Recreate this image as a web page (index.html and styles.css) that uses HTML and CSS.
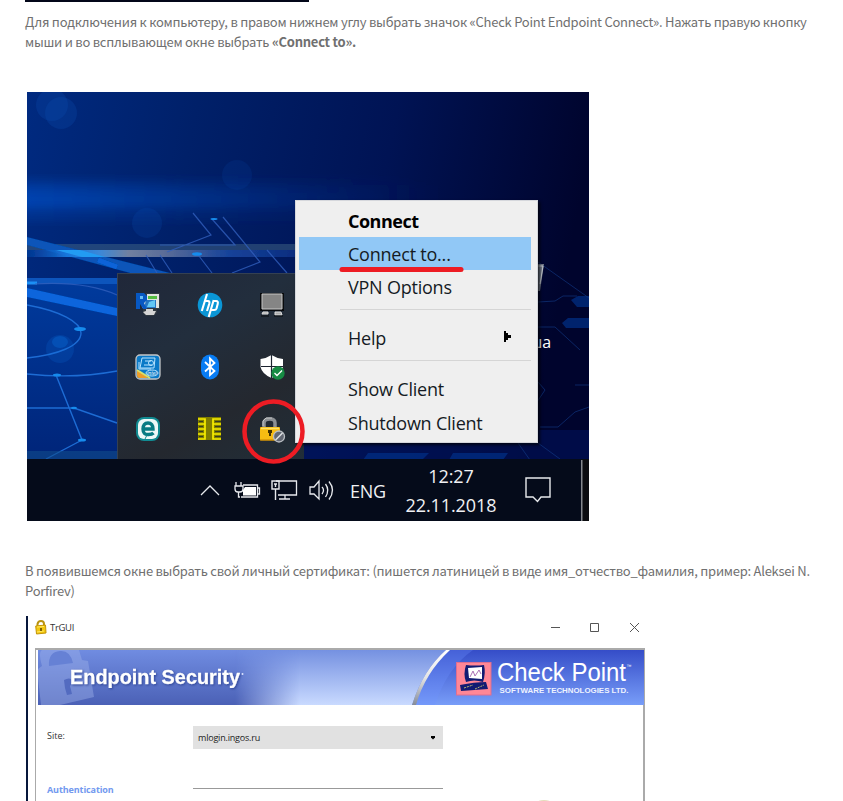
FILE: index.html
```html
<!DOCTYPE html>
<html lang="ru">
<head>
<meta charset="utf-8">
<title>Check Point Endpoint Connect</title>
<link rel="stylesheet" href="styles.css">
</head>
<body>
<main class="article">
  <div class="previous-image"></div>
  <p class="step"><span class="l1">Для подключения к компьютеру, в правом нижнем углу выбрать значок «Check Point Endpoint Connect». Нажать правую кнопку</span><br><span class="l2">мыши и во всплывающем окне выбрать <b>«Connect to».</b></span></p>

  <section class="desktop">
    <svg class="wallpaper" viewBox="27 92 562 429" aria-hidden="true">
      <defs>
        <linearGradient id="sky" x1="0" y1="0" x2="1" y2="0.15"><stop offset="0" stop-color="#002a80"/><stop offset=".3" stop-color="#002069"/><stop offset=".65" stop-color="#001354"/><stop offset="1" stop-color="#00042d"/></linearGradient>
        <linearGradient id="glow" x1="0" x2="1" y1="0" y2="0"><stop offset="0" stop-color="#0050c8" stop-opacity=".75"/><stop offset=".5" stop-color="#0044b0" stop-opacity=".35"/><stop offset="1" stop-color="#003090" stop-opacity="0"/></linearGradient>
        <linearGradient id="flare" x1="0" x2="1" y1="0" y2="0"><stop offset="0" stop-color="#0a4bb0" stop-opacity=".4"/><stop offset=".15" stop-color="#1777dc"/><stop offset=".27" stop-color="#3b88d8"/><stop offset=".38" stop-color="#7180a0"/><stop offset=".52" stop-color="#596b98"/><stop offset=".75" stop-color="#17439a"/><stop offset="1" stop-color="#0a2d80"/></linearGradient>
        <linearGradient id="low" x1="0" x2="0" y1="0" y2="1"><stop offset="0" stop-color="#003a9c"/><stop offset="1" stop-color="#002478"/></linearGradient>
        <filter id="soft"><feGaussianBlur stdDeviation="4"/></filter>
        <filter id="edge"><feGaussianBlur stdDeviation=".5"/></filter>
      </defs>
      <rect x="27" y="92" width="562" height="429" fill="url(#sky)"/>
      <g fill="#0a50b4" fill-opacity=".25"><circle cx="52" cy="105" r="16"/><circle cx="61" cy="113" r="16"/><circle cx="237" cy="175" r="15" fill-opacity=".15"/><circle cx="147" cy="223" r="15" fill-opacity=".2"/></g>
      <g fill="url(#glow)" filter="url(#soft)"><rect x="17" y="179" width="410" height="42" opacity=".35"/><rect x="17" y="185" width="430" height="24" opacity=".5"/><rect x="17" y="193" width="370" height="14" opacity=".45"/></g>
      <rect x="27" y="284" width="92" height="180" fill="url(#low)"/>
      <rect x="27" y="244" width="268" height="6" fill="#426583" fill-opacity=".5"/>
      <g filter="url(#edge)">
        <path d="M27 237L170 273H130L27 245Z" fill="#0754b9"/>
        <rect x="27" y="250" width="268" height="7" fill="url(#flare)"/>
        <path d="M56 250L82 257H105L80 250Z" fill="#249cf3"/>
        <rect x="27" y="278" width="90" height="6" fill="#0754bc"/>
        <path d="M27 288L117 308V316L27 297Z" fill="#0865dc"/>
        <path d="M27 283H37" stroke="#1e90f5" stroke-width="3"/>
        <path d="M98 260L117 267" stroke="#0864d8" stroke-width="5"/>
      </g>
      <g fill="none" stroke="#315fbd" stroke-width="1.2" opacity=".8">
        <path d="M193 213L211 235L167 252M212 219L235 245H160M223 217L260 262L232 273M267 250L287 273M146 255L157 273M160 255L172 273M199 256L212 273"/>
        <path d="M35 284Q85 281 117 295"/>
      </g>
      <g fill="none" stroke="#1d6cd4" stroke-width="1.4">
        <path d="M27 305C60 311 81 322 81 333C81 346 57 355 27 358M27 374Q75 379 117 371M56 375L82 440L46 459M27 408H74L117 423"/>
      </g>
      <g fill="#168bed"><ellipse cx="80" cy="329" rx="6" ry="2"/><ellipse cx="57" cy="375" rx="4" ry="1.5"/><ellipse cx="82" cy="440" rx="4" ry="1.5"/><ellipse cx="74" cy="408" rx="3" ry="1.2"/><ellipse cx="197" cy="254" rx="5" ry="1.8"/><ellipse cx="214" cy="219" rx="3.5" ry="1"/></g>
      <circle cx="60" cy="349" r="14" fill="#0870dc" fill-opacity=".2"/><ellipse cx="60" cy="342" rx="8" ry="6" fill="#0870dc" fill-opacity=".35"/>
      <rect x="27" y="451" width="90" height="8" fill="#104c8b" fill-opacity=".6"/>
      <path d="M303 430H589V460H303Z" fill="#00135a" opacity=".6"/>
      <g fill="#002e83"><path d="M571 300L578 296H589V307H577ZM562 323L568 318H589V328H566ZM363 460L368 453H429L422 460ZM449 460L453 453H508L503 460Z" opacity=".75"/></g>
      <path d="M538 262L589 298M538 302L555 301L563 296H577M538 327H555L580 350M538 382L545 390L537 402M540 427H558L575 412L589 407M575 385H589M530 460L518 443H538L560 459" fill="none" stroke="#123c88" stroke-width="1" opacity=".6"/>
      <path d="M537 264H544L540 291H537Z" fill="#71798a"/><path d="M538 266H543L540 284" fill="none" stroke="#c8ccd2"/>
      <rect x="27" y="459" width="562" height="62" fill="#050b1a"/>
      <rect x="581" y="459" width="8" height="62" fill="#0b0c10"/><rect x="581" y="460" width="1.5" height="61" fill="#85888e"/>
    </svg>
    <span class="desktop-label">ша</span>

    <div class="tray">
      <svg class="icon" viewBox="0 0 28 28"><path d="M12 2H26V18H23V22L19 25H12L9 22V18Z" fill="#303941"/><path d="M13 3H25V17H8V7H13Z" fill="#e1e3de"/><path d="M14 5H23V8H14Z" fill="#54bd40"/><path d="M12 9H22V17H10Z" fill="#2676c3"/><path d="M15 11L21 9V16H13Z" fill="#63c8f5"/><path d="M12 18H19V20H22L20 24H12L9 21L12 20Z" fill="#d4d4d4"/><path d="M2 2H10L13 5V9L10 12L13 18H9L6 13V18H2Z" fill="#0758c3"/><path d="M6 5H9V8H6Z" fill="#6abdf5"/></svg>
      <svg class="icon" viewBox="0 0 28 28"><circle cx="14" cy="14" r="12.3" fill="#0a96d6"/><g fill="none" stroke="#fff" stroke-width="2.1"><path d="M11 3L5.8 20M9 10H12Q14 10 13.2 13L11 20M17.7 9L12.7 26M17.5 10H20Q22.5 10 21.7 13L20.5 17.5Q20 19 18 19H15"/></g></svg>
      <svg class="icon" viewBox="0 0 28 28"><path d="M2 2H26V20H2Z" fill="#080a0d"/><path d="M4 3H24V18H4Z" fill="#858585" stroke="#c6c6c6"/><path d="M5 21H10V23H4ZM17 21H23L24 24H17Z" fill="#aaa" stroke="#ddd"/><path d="M3 25H11M16 25H25" stroke="#080a0d"/></svg>
      <svg class="icon" viewBox="0 0 28 28"><rect x="2" y="2" width="24" height="24" rx="4" fill="#0a79c7" stroke="#c4c6c8" stroke-width="1.3"/><path d="M3 17Q11 22 14 25H5Q3 25 3 22Z" fill="#ed9d29"/><path d="M3 17L16 25" stroke="#d7e06c" stroke-width="2"/><g fill="none" stroke="#b8e4ff"><path d="M8 5H21L20 15H6Z"/><path d="M5 9V16H17M11 8H17M10 12H18"/><circle cx="17" cy="10" r="2.5"/><ellipse cx="18" cy="20" rx="6" ry="3"/></g><text x="13" y="22" class="micro">intel</text></svg>
      <svg class="icon" viewBox="0 0 28 28"><rect x="5" y="1.5" width="18" height="25" rx="9" fill="#087cf3"/><path d="M9 9L18.5 18L14 22V5.5L18.5 10L9 18.5" fill="none" stroke="#fff" stroke-width="1.8"/></svg>
      <svg class="icon" viewBox="0 0 28 28"><path d="M13.5 2Q9 5 2.5 6V14Q4 21 13.5 25Q23 21 25 14V6Q18 5 13.5 2Z" fill="#fff"/><path d="M13.5 2V25M3 13.5H25" stroke="#1c2330" stroke-width="1.2"/><circle cx="20" cy="20" r="6.7" fill="#168b43"/><path d="M16.5 20L19 22.5L24 17.5" stroke="#fff" stroke-width="1.4" fill="none"/></svg>
      <svg class="icon" viewBox="0 0 28 28"><rect x="2" y="2" width="24" height="24" rx="8" fill="#118b92"/><rect x="4" y="4" width="20" height="20" rx="6" fill="#edf8f7"/><path d="M9 14H19Q19 8 14 8Q9 8 9 14T14.5 19.5Q18 19.5 19.5 18" fill="none" stroke="#087b83" stroke-width="3.4"/><path d="M11 24L13 20" stroke="#118b92"/></svg>
      <svg class="icon" viewBox="0 0 28 28"><path d="M2 2H25V25H2Z" fill="#807d00"/><path d="M2 4H9V24H2M25 4H17V24H25M2 9H9M2 14H9M2 19H9M17 9H25M17 14H25M17 19H25" fill="none" stroke="#f7ee00" stroke-width="1.7"/><path d="M3 6.5H7M3 11.5H7M3 16.5H7M3 21.5H7M19 6.5H25M19 11.5H25M19 16.5H25M19 21.5H25" stroke="#363d20" stroke-width="1"/></svg>
      <svg class="icon" viewBox="0 0 28 28"><path d="M6 14V8Q6 4 12 4Q17 4 17 8V14" fill="none" stroke="#8c9094" stroke-width="3.5"/><path d="M5 11V6L8 3H14" fill="none" stroke="#c5c7c8"/><rect x="2" y="12" width="20" height="13.5" rx="1" fill="#f7bc12"/><path d="M3 13.5H21" stroke="#ffe263" stroke-width="1.5"/><path d="M2 25H20" stroke="#c48200"/><path d="M10 15H14V18H13V21H11V18H10Z" fill="#423100"/><circle cx="21" cy="21.5" r="5.5" fill="#626873" stroke="#b9bec3" stroke-width="1.3"/><path d="M17.5 25L24.5 18" stroke="#e0e3e5" stroke-width="1.5"/></svg>
    </div>

    <div class="menu">
      <div class="item strong"><span>Connect</span></div>
      <div class="item active"><span>Connect to...</span></div>
      <div class="item vpn"><span>VPN Options</span></div>
      <hr>
      <div class="item help"><span>Help</span><svg class="arrow" viewBox="0 0 8 12"><path d="M0 0H2V2H4V4H7V7H4V9H2V11H0Z"/></svg></div>
      <hr class="second">
      <div class="item show"><span>Show Client</span></div>
      <div class="item"><span>Shutdown Client</span></div>
    </div>

    <svg class="marks" viewBox="27 92 562 429" aria-hidden="true"><path d="M342 269.5H461" stroke="#ed1c24" stroke-width="5" stroke-linecap="round"/><ellipse cx="273.5" cy="431.5" rx="29" ry="30" fill="none" stroke="#ed1c24" stroke-width="4.5"/></svg>

    <div class="taskbar">
      <svg class="status" viewBox="198 476 140 28"><g fill="none" stroke="#e7e9ed" stroke-width="1.3"><path d="M201 495L210 486L219 495"/><path d="M236 482V486M241 482V486M235 486H243V489Q243 492 240 492H238Q235 492 235 489ZM238.5 492V497H240"/><path d="M243 485H257.5V497H241M258 488H259.5V494H258"/><path d="M276 481H296.5V495H278M285 495V499M279 499H290"/><path d="M272 481H279V489H272ZM275.5 489V500M274 484H277M275.5 484V487" stroke-width="1.4"/><path d="M310 487H314L319 481V499L314 494H310ZM322 487Q325 490 322 494M325.5 484Q330 490 325.5 497M329 481.5Q336 490 329 499.5"/></g><path d="M245 487H256V495.5H243V490Z" fill="#fff"/></svg>
      <span class="lang">ENG</span>
      <div class="clock"><span class="time">12:27</span><span class="date">22.11.2018</span></div>
      <svg class="notice" viewBox="0 0 28 28"><path d="M2 2H26V21H17L13.5 25.5L9 21H2Z" fill="none" stroke="#e8eaed" stroke-width="1.4"/></svg>
    </div>
  </section>

  <p class="step second-step"><span class="l3">В появившемся окне выбрать свой личный сертификат: (пишется латиницей в виде имя_отчество_фамилия, пример: Aleksei N.</span><br><span class="l4">Porfirev)</span></p>

  <section class="client">
    <header class="titlebar">
      <svg class="lock" viewBox="0 0 12 15"><path d="M2.5 7V4Q3 1 6 1Q9 1 9 4V6" fill="none" stroke="#b99310" stroke-width="2"/><path d="M.7 6L10.5 5L11 13L1.5 14Z" fill="#f3c70f" stroke="#c49507"/><path d="M2 7L9 6.5M2 12L9 11" stroke="#ffe963"/><path d="M6 8V11" stroke="#6b5000" stroke-width="1.7"/></svg>
      <span class="caption">TrGUI</span>
      <svg class="controls" viewBox="550 620 92 14"><path d="M551 627.5H560M590.5 623.5H598.5V631.5H590.5ZM630 623L639 632M639 623L630 632" fill="none" stroke="#555"/></svg>
    </header>
    <div class="frame">
      <svg class="banner" viewBox="38 650 606 55">
        <defs>
          <linearGradient id="left" x2="0" y2="1"><stop stop-color="#708ce1"/><stop offset="1" stop-color="#4b61b6"/></linearGradient>
          <linearGradient id="pale" x2="0" y2="1"><stop stop-color="#7591e1"/><stop offset="1" stop-color="#c9daff"/></linearGradient>
          <linearGradient id="fade"><stop stop-color="#fff" stop-opacity="0"/><stop offset="1" stop-color="#fff"/></linearGradient>
          <linearGradient id="right" x2="0" y2="1"><stop stop-color="#354dc8"/><stop offset="1" stop-color="#789df8"/></linearGradient>
          <linearGradient id="rim" x2="0" y2="1"><stop stop-color="#fff"/><stop offset=".5" stop-color="#e5e5e5"/><stop offset="1" stop-color="#858b99"/></linearGradient>
          <mask id="blend"><rect x="235" y="650" width="65" height="55" fill="url(#fade)"/><rect x="300" y="650" width="150" height="55" fill="#fff"/></mask>
        </defs>
        <path d="M38 650H644V705H38Z" fill="url(#left)"/>
        <rect x="230" y="650" width="220" height="55" fill="url(#pale)" mask="url(#blend)"/>
        <path d="M41 705L38 678V669L42 666Q38 652 42 650H79L82 660L88 661L94 697L60 705Z" fill="#9bafe9" opacity=".45"/>
        <path d="M49 666Q48 652 60 651Q70 650 73 663Z" fill="#6681d5"/>
        <path d="M64 680Q71 676 73 682L70 686L72 694L67 695L65 688Z" fill="#536bc0"/>
        <path d="M412 705Q423 670 446 650H644V705Z" fill="url(#right)"/>
        <path d="M415 705Q423 671 449 650H473Q447 668 435 705Z" fill="#6e93ff" opacity=".3"/>
        <path d="M412 705Q423 670 446 650H450Q425 673 416 705Z" fill="url(#rim)"/>
        <text x="70" y="683.5" textLength="170" lengthAdjust="spacingAndGlyphs" class="product">Endpoint Security</text><circle cx="242.5" cy="674" r="1" fill="#dce4ff"/>
        <rect x="456.5" y="662.5" width="34.5" height="32.5" fill="#ff8796" stroke="#dd6f90"/>
        <path d="M466 665Q475 666 484 665Q486 673 483 682Q474 679 466 682Q463 674 466 665Z" fill="#111b72"/><path d="M468 668L482 667V679L469 678Z" fill="#fff"/><path d="M470 677L473 671L475 676L479 670L481 674" fill="none" stroke="#ad72b6"/><path d="M460 685Q475 682 486 682L488 689L461 691Z" fill="#111b72"/><path d="M464 688L473 685M475 689L484 685" stroke="#bcb96d" stroke-dasharray="2 1"/>
        <text x="497" y="681" textLength="129" lengthAdjust="spacingAndGlyphs" class="brand">Check Point</text><text x="626.5" y="668" class="tm">™</text>
        <text x="499.5" y="693" textLength="129" lengthAdjust="spacingAndGlyphs" class="tagline">SOFTWARE TECHNOLOGIES LTD.</text>
      </svg>
      <div class="site-row"><span class="site">Site:</span><div class="select"><span>mlogin.ingos.ru</span><svg viewBox="0 0 6 4"><path d="M1 0H5V1.5L3 3.5L1 1.5Z"/></svg></div></div>
      <div class="auth-row"><span class="auth">Authentication</span><i class="rule"></i><i class="key-tip"></i></div>
    </div>
  </section>
</main>
</body>
</html>
```

FILE: styles.css
```css
* { box-sizing: border-box; }
body { margin: 0; height: 801px; overflow: hidden; background: #fff; }
.article { padding-left: 25px; height: 801px; overflow: hidden; }
.previous-image { width: 284px; height: 2px; background: #030719; }
.step { margin: 10px 0 0; height: 40px; font: 13px/20px "Noto Sans CJK SC", "Open Sans", sans-serif; letter-spacing: -.25px; color: #707070; white-space: nowrap; }
.second-step { margin-top: 40px; }
.desktop { position: relative; display: flex; flex-direction: column; justify-content: flex-end; width: 562px; height: 429px; margin: 40px 0 0 2px; overflow: hidden; font-family: "Open Sans", "Noto Sans", sans-serif; }
.wallpaper, .marks { position: absolute; left: 0; top: 0; width: 562px; height: 429px; }
.desktop-label { position: absolute; left: 501px; top: 239px; font-size: 16px; line-height: 22px; color: #fff; }
.tray { position: absolute; left: 90px; top: 181px; width: 187px; height: 186px; display: grid; grid-template-columns: repeat(3, 62px); grid-template-rows: repeat(3, 62px); place-items: center; background: linear-gradient(150deg, #202739, #222e3d 35%, #24282f 70%, #212e38); box-shadow: inset 1px 1px #344052; }
.icon { width: 28px; height: 28px; position: relative; top: .5px; }
.micro { font: italic 5px "Open Sans", sans-serif; fill: #fff; }
.menu { position: absolute; left: 268px; top: 108px; width: 243px; height: 243px; padding: 4px 7px 4px 4px; background: #efefef; border: 0; box-shadow: inset 0 0 0 1px #d5d7dc, 2px 2px 3px #000b; }
.item { height: 33px; padding: 0 19px 0 49px; display: flex; align-items: center; justify-content: space-between; font-size: 18px; line-height: 24px; letter-spacing: -.22px; color: #151b24; white-space: nowrap; }
.strong { font-weight: bold; letter-spacing: -.5px; color: #000; }
.active { background: #91c8f6; }
.help, .show { position: relative; top: -.5px; }
.menu hr { margin: 6px 0 12px 41px; height: 1px; border: 0; background: #d5d5d5; }
.menu hr.second { margin: 5px 0 12px 41px; }
.arrow { width: 8px; height: 12px; margin-bottom: 3px; }
.taskbar { position: relative; display: flex; height: 62px; color: #f0f1f4; font-size: 18px; letter-spacing: -.1px; }
.status { width: 140px; height: 28px; margin: 17px 0 0 171px; }
.lang { margin: 20px 0 0 12px; width: 36px; line-height: 24px; letter-spacing: -.3px; }
.clock { display: flex; flex-direction: column; align-items: center; width: 92px; margin: 3px 0 0 19px; line-height: 29px; }
.notice { width: 28px; height: 28px; margin: 17px 0 0 27px; }
.client { width: 620px; height: 185px; margin: 15px 0 0 1px; border-left: 2px solid #07163b; font: 9px/14px "Open Sans", sans-serif; color: #333; }
.titlebar { display: flex; align-items: center; height: 32px; padding: 0 4px 10px 7px; }
.lock { width: 12px; height: 15px; }
.caption { margin: 2px 0 0 3px; font-size: 9.5px; letter-spacing: -.3px; }
.controls { width: 92px; height: 14px; margin-left: auto; }
.frame { margin-left: 7px; width: 610px; height: 153px; border: solid #aaa; border-width: 2px 2px 0 1px; padding-left: 2px; }
.banner { display: block; width: 606px; height: 55px; }
.product { font: bold 20px "Liberation Sans", sans-serif; fill: #fff; stroke: #fff; stroke-width: .3px; filter: drop-shadow(1px 1px 1px #304696); }
.brand { font: 25px "Liberation Sans", sans-serif; fill: #fff; }
.tagline { font: bold 8px "Liberation Sans", sans-serif; fill: #eef3ff; }
.tm { font: 5px "Liberation Sans", sans-serif; fill: #fff; }
.site-row { display: flex; padding: 21px 0 0 9px; height: 44px; }
.site { width: 146px; padding-top: 3px; }
.select { display: flex; align-items: center; justify-content: space-between; width: 250px; height: 23px; padding: 0 7px 0 5px; background: #e1e1e1; color: #222; letter-spacing: -.2px; }
.select svg { width: 6px; height: 4px; }
.auth-row { position: relative; display: flex; padding: 34px 0 0 9px; }
.auth { width: 146px; color: #7299ef; font-weight: bold; letter-spacing: -.1px; }
.rule { width: 250px; height: 1px; margin-top: 5px; background: #999; }
.key-tip { position: absolute; left: 499px; top: 51px; width: 14px; height: 5px; border-radius: 50%; background: #e5dcbb; }
```
